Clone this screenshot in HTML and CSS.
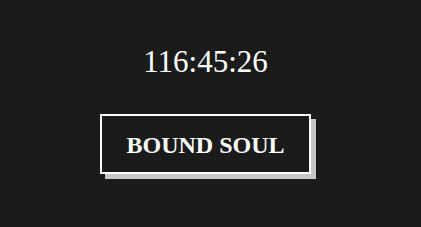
FILE: index.html
```html
<!DOCTYPE html>
<html lang="en">
<head>
  <meta charset="UTF-8" />
  <title>Bound Soul</title>
  <link rel="stylesheet" href="styles.css">
</head>
<body>
<div class="screen">
  <div class="timer" id="timer">116:45:26</div>
  <button class="bound-btn">BOUND SOUL</button>
</div>
</body>
</html>
```

FILE: styles.css
```css
body {
  margin: 0;
  background: #1b1b1b;
  color: white;
  font-family: "Liberation Serif", "Times New Roman", serif;
}
.screen {
  height: 227px;
  display: flex;
  flex-direction: column;
  align-items: center;
  padding: 47px 10px 0 0;
  box-sizing: border-box;
}
.timer { font-size: 31px; line-height: 30px; }
.bound-btn {
  margin-top: 37px;
  padding: 17px 24px 15px;
  background: #1b1b1b;
  color: white;
  border: 2px solid white;
  box-shadow: 5px 5px 0 #c6c6c6;
  font-family: inherit;
  font-size: 24px;
  line-height: 24px;
  font-weight: bold;
  width: 211px;
  cursor: pointer;
}
```
